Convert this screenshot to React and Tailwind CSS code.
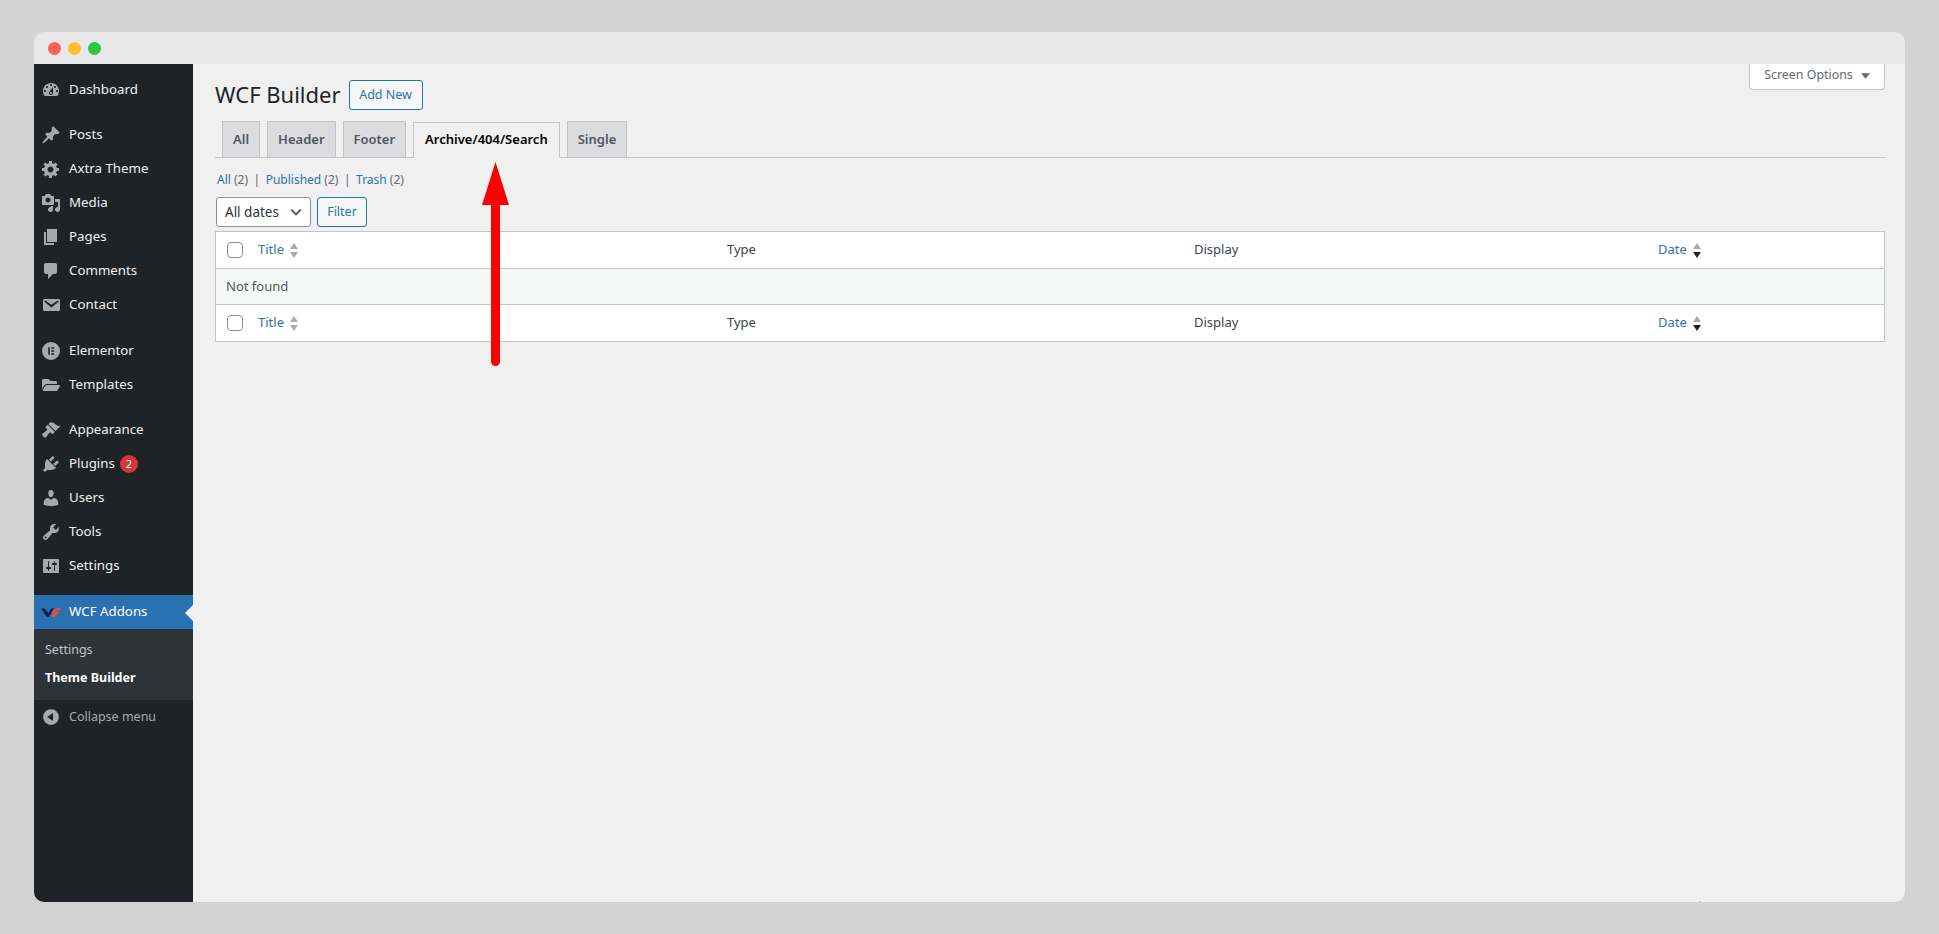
import React from "react";
import { FaFolderOpen } from "react-icons/fa";

const font = "font-['Noto_Sans','Open_Sans',sans-serif]";

const P = {
  dashboard: "M3.76 16h12.48c1.1-1.37 1.76-3.11 1.76-5 0-4.42-3.58-8-8-8s-8 3.58-8 8c0 1.89.66 3.63 1.76 5zM10 4c.55 0 1 .45 1 1s-.45 1-1 1-1-.45-1-1 .45-1 1-1zM6 6c.55 0 1 .45 1 1s-.45 1-1 1-1-.45-1-1 .45-1 1-1zm8 0c.55 0 1 .45 1 1s-.45 1-1 1-1-.45-1-1 .45-1 1-1zm-5.37 5.55L12 7v6c0 1.1-.9 2-2 2s-2-.9-2-2c0-.57.24-1.08.63-1.45zM4 10c.55 0 1 .45 1 1s-.45 1-1 1-1-.45-1-1 .45-1 1-1zm12 0c.55 0 1 .45 1 1s-.45 1-1 1-1-.45-1-1 .45-1 1-1zm-5 3c0-.55-.45-1-1-1s-1 .45-1 1 .45 1 1 1 1-.45 1-1z",
  post: "M10.44 3.02l1.82-1.82 6.36 6.35-1.83 1.82c-1.05-.68-2.48-.57-3.41.36l-.75.75c-.92.93-1.04 2.35-.35 3.41l-1.83 1.82-2.41-2.41-2.8 2.79c-.42.42-3.38 2.71-3.8 2.29s1.86-3.39 2.28-3.81l2.79-2.79L4.1 9.36l1.83-1.82c1.05.69 2.48.57 3.4-.36l.75-.75c.93-.92 1.05-2.35.36-3.41z",
  gear: "M18 12h-2.18c-.17.7-.44 1.35-.81 1.93l1.54 1.54-2.1 2.1-1.54-1.54c-.58.36-1.23.63-1.91.79V19H8v-2.18c-.68-.16-1.33-.43-1.91-.79l-1.54 1.54-2.12-2.12 1.54-1.54c-.36-.58-.63-1.23-.79-1.91H1V9.03h2.17c.16-.7.44-1.35.8-1.94L2.43 5.55l2.1-2.1 1.54 1.54c.58-.37 1.24-.64 1.93-.81V2h3v2.18c.68.16 1.33.43 1.91.79l1.54-1.54 2.12 2.12-1.54 1.54c.36.59.64 1.24.8 1.94H18V12zm-8.5 1.5c1.66 0 3-1.34 3-3s-1.34-3-3-3-3 1.34-3 3 1.34 3 3 3z",
  media: "M13 11V4c0-.55-.45-1-1-1h-1.67L9 1H5L3.67 3H2c-.55 0-1 .45-1 1v7c0 .55.45 1 1 1h10c.55 0 1-.45 1-1zM7 4.5c1.38 0 2.5 1.12 2.5 2.5S8.38 9.5 7 9.5 4.5 8.38 4.5 7 5.62 4.5 7 4.5zM14 6h5v10.5c0 1.38-1.12 2.5-2.5 2.5S14 17.88 14 16.5s1.12-2.5 2.5-2.5c.17 0 .34.02.5.05V9h-3V6zm-4 8.05V13h2v3.5c0 1.38-1.12 2.5-2.5 2.5S7 17.88 7 16.5 8.12 14 9.5 14c.17 0 .34.02.5.05z",
  page: "M6 15V2h10v13H6zm-1 1h8v2H3V5h2v11z",
  comment: "M5 2h9c1.1 0 2 .9 2 2v7c0 1.1-.9 2-2 2h-2l-5 5v-5H5c-1.1 0-2-.9-2-2V4c0-1.1.9-2 2-2z",
  email: "M3.87 4h13.25C18.37 4 19 4.59 19 5.79v8.42c0 1.19-.63 1.79-1.88 1.79H3.87c-1.25 0-1.88-.6-1.88-1.79V5.79c0-1.2.63-1.79 1.88-1.79zm6.62 8.6l6.74-5.53c.24-.2.43-.66.13-1.07-.29-.41-.82-.42-1.17-.17l-5.7 3.86L4.8 5.83c-.35-.25-.88-.24-1.17.17-.3.41-.11.87.13 1.07z",
  elementor: "M10 1a9 9 0 1 0 0 18 9 9 0 0 0 0-18zM7.2 6.2h1.6v7.6H7.2zM10.2 6.2h3v1.5h-3zM10.2 9.2h3v1.5h-3zM10.2 12.3h3v1.5h-3z",
  brush: "M14.48 11.06L7.41 3.99l1.5-1.5c.5-.56 2.3-.47 3.51.32 1.21.8 1.43 1.28 2.91 2.1 1.18.64 2.45 1.26 4.45.85zm-.71.71L6.7 4.7 4.93 6.47c-.39.39-.39 1.02 0 1.41l1.06 1.06c.39.39.39 1.03 0 1.42-.6.6-1.43 1.11-2.21 1.69-.35.26-.7.53-1.01.84C1.43 13.26 1 14.09 1.25 15c.25.91 1.6 2.2 2.5 2.5.9.3 1.73-.19 2.12-1.59.31-.31.58-.66.84-1.01.58-.78 1.09-1.61 1.69-2.21.39-.39 1.03-.39 1.42 0l1.06 1.06c.39.39 1.02.39 1.41 0z",
  plugin: "M13.11 4.36L9.87 7.6 8 5.73l3.24-3.24c.35-.34 1.05-.2 1.56.32.52.51.66 1.21.31 1.55zm-8 1.77l.91-1.12 9.01 9.01-1.19.84c-.71.71-2.63 1.16-3.82 1.16H6.14L4.9 17.26c-.59.59-1.54.59-2.12 0-.59-.58-.59-1.53 0-2.12l1.24-1.24v-3.88c0-1.13.4-3.19 1.09-3.89zm7.26 3.97l3.24-3.24c.34-.35 1.04-.21 1.55.31.52.51.66 1.21.31 1.55l-3.24 3.25z",
  users: "M10 9.25c-2.27 0-2.73-3.44-2.73-3.44C7 4.02 7.82 2 9.97 2c2.16 0 2.98 2.02 2.71 3.81 0 0-.41 3.44-2.68 3.44zm0 2.57L12.72 10c2.39 0 4.52 2.33 4.52 4.53v2.49s-3.65 1.13-7.24 1.13c-3.65 0-7.24-1.13-7.24-1.13v-2.49c0-2.25 1.94-4.48 4.47-4.48z",
  tools: "M16.68 9.77c-1.34 1.34-3.3 1.67-4.95.99l-5.41 6.52c-.99.99-2.59.99-3.58 0s-.99-2.59 0-3.57l6.52-5.42c-.68-1.65-.35-3.61.99-4.95 1.28-1.28 3.12-1.62 4.72-1.06l-2.89 2.89 2.82 2.82 2.86-2.87c.53 1.58.18 3.39-1.08 4.65zM3.81 16.21c.4.39 1.04.39 1.43 0 .4-.4.4-1.04 0-1.43-.39-.4-1.03-.4-1.43 0-.39.39-.39 1.03 0 1.43z",
  settings: "M18 16V4c0-.55-.45-1-1-1H3c-.55 0-1 .45-1 1v12c0 .55.45 1 1 1h14c.55 0 1-.45 1-1zM8 11h1c.55 0 1 .45 1 1s-.45 1-1 1H8v1.5c0 .28-.22.5-.5.5s-.5-.22-.5-.5V13H6c-.55 0-1-.45-1-1s.45-1 1-1h1V5.5c0-.28.22-.5.5-.5s.5.22.5.5V11zm5-2h-1c-.55 0-1-.45-1-1s.45-1 1-1h1V5.5c0-.28.22-.5.5-.5s.5.22.5.5V7h1c.55 0 1 .45 1 1s-.45 1-1 1h-1v5.5c0 .28-.22.5-.5.5s-.5-.22-.5-.5V9z",
  collapse: "M10 2.16c4.33 0 7.84 3.51 7.84 7.84s-3.51 7.84-7.84 7.84S2.16 14.33 2.16 10 5.71 2.16 10 2.16zm2 11.72V6.12L6.18 9.97z",
};

function Dashicon({ d }) {
  return (
    <svg viewBox="0 0 20 20" className="w-5 h-5 fill-[#a7aaad]">
      <path fillRule="evenodd" d={d} />
    </svg>
  );
}

const groups = [
  [{ label: "Dashboard", icon: P.dashboard }],
  [
    { label: "Posts", icon: P.post },
    { label: "Axtra Theme", icon: P.gear },
    { label: "Media", icon: P.media },
    { label: "Pages", icon: P.page },
    { label: "Comments", icon: P.comment },
    { label: "Contact", icon: P.email },
  ],
  [
    { label: "Elementor", icon: P.elementor },
    { label: "Templates", folder: true },
  ],
  [
    { label: "Appearance", icon: P.brush },
    { label: "Plugins", icon: P.plugin, badge: "2" },
    { label: "Users", icon: P.users },
    { label: "Tools", icon: P.tools },
    { label: "Settings", icon: P.settings },
  ],
];

function MenuRow({ item }) {
  return (
    <div className="h-[34px] flex items-center text-[13.3px] text-[#f0f0f1]">
      <span className="w-[35px] pl-[7px] flex items-center">
        {item.folder ? <FaFolderOpen className="w-[18px] h-[18px] ml-[1px] text-[#a7aaad]" /> : <Dashicon d={item.icon} />}
      </span>
      <span>{item.label}</span>
      {item.badge && (
        <span className="ml-[5px] w-[18px] h-[18px] rounded-full bg-[#d63638] text-white text-[11px] flex items-center justify-center">
          {item.badge}
        </span>
      )}
    </div>
  );
}

function Sidebar() {
  return (
    <aside className="w-[159px] shrink-0 bg-[#1f2328] flex flex-col pt-[9px]">
      {groups.map((g, i) => (
        <div key={g[0].label} className={i === 1 ? "mb-[12px]" : i === 3 ? "mb-[12px]" : "mb-[11px]"}>
          {g.map((item) => (
            <MenuRow key={item.label} item={item} />
          ))}
        </div>
      ))}
      <div className="relative h-[34px] bg-[#2a71b2] flex items-center text-[13.3px] text-white">
        <span className="w-[35px] pl-[7px] flex items-center">
          {/* addon logo: dark check stroke with a red mark on its right arm */}
          <svg viewBox="0 0 20 10" className="w-[20px] h-[10px]">
            <path d="M0 1.500h3.500L7.500 6l3-4.500h2.500L7.800 10H6z" fill="#0f2140" />
            <path d="M10.500 5.500C12 2.500 15 .5 20 1l-1 2.500h-3.500L14 6l2.500-1.500H19l-5 5.500h-3.500l1.500-3.500z" fill="#e8503f" />
          </svg>
        </span>
        <span>WCF Addons</span>
        <span className="absolute right-0 top-[10px] w-0 h-0 border-y-[8px] border-y-transparent border-r-[8px] border-r-[#f0f0f1]" />
      </div>
      <div className="bg-[#2e3338] h-[71px] pt-[7px] pl-[11px] text-[12.5px]">
        <div className="h-[28px] flex items-center text-[#c3c4c7]">Settings</div>
        <div className="h-[28px] flex items-center text-white font-bold">Theme Builder</div>
      </div>
      <div className="h-[34px] flex items-center text-[12.5px] text-[#a7aaad]">
        <span className="w-[35px] pl-[7px] flex items-center"><Dashicon d={P.collapse} /></span>
        <span>Collapse menu</span>
      </div>
    </aside>
  );
}

const tabs = ["All", "Header", "Footer", "Archive/404/Search", "Single"];

function Tabs() {
  return (
    <div className="mt-[12px] h-[36px] border-b border-[#c3c4c7] flex items-end gap-[7px] pl-[7px]">
      {tabs.map((t) => {
        const on = t === "Archive/404/Search";
        return (
          <div
            key={t}
            className={
              "h-[36px] border border-[#c3c4c7] flex items-center text-[13px] font-semibold " +
              (on ? "px-[11px] bg-[#f0f0f1] border-b-[#f0f0f1] text-black -mb-[1px]" : "px-[10px] bg-[#dcdcde] text-[#50575e] border-b-0 mb-0")
            }
          >
            {t}
          </div>
        );
      })}
    </div>
  );
}

function SortArrows({ active }) {
  return (
    <svg viewBox="0 0 10 15" className="w-[10px] h-[15px] ml-[5px]">
      <path d="M5 0l4 6H1z" fill="#a7aaad" />
      <path d="M5 15l-4-6h8z" fill={active ? "#1d2327" : "#a7aaad"} />
    </svg>
  );
}

function HeadRow({ top }) {
  return (
    <div className={"h-[37px] bg-white grid grid-cols-[511px_467px_464px_1fr] items-center text-[13px] " + (top ? "border-b" : "border-t") + " border-[#c3c4c7]"}>
      <div className="flex items-center pl-[11px]">
        <span className="w-4 h-4 border border-[#8c8f94] rounded-[4px] bg-white mr-[15px]" />
        <span className="text-[#2f72a8]">Title</span>
        <SortArrows />
      </div>
      <div className="text-[#3c434a]">Type</div>
      <div className="text-[#3c434a]">Display</div>
      <div className="flex items-center">
        <span className="text-[#2f72a8]">Date</span>
        <SortArrows active />
      </div>
    </div>
  );
}

export default function App() {
  return (
    <div className={"h-[934px] bg-[#d3d3d3] pt-[32px] px-[34px] relative overflow-hidden " + font}>
      <div className="h-[870px] rounded-[10px] overflow-hidden flex flex-col">
        <div className="h-[32px] shrink-0 bg-[#e8e8e8] flex items-center gap-[7px] pl-[14px]">
          <span className="w-[13px] h-[13px] rounded-full bg-[#ff5f57]" />
          <span className="w-[13px] h-[13px] rounded-full bg-[#febc2e]" />
          <span className="w-[13px] h-[13px] rounded-full bg-[#28c840]" />
        </div>
        <div className="flex-1 flex min-h-0">
          <Sidebar />
          <main className="flex-1 bg-[#f0f0f1] pl-[22px] pr-[20px] flex flex-col text-[#2c3338]">
            <div className="flex justify-end">
              <div className="h-[26px] w-[136px] pb-[2px] bg-white border border-t-0 border-[#c3c4c7] rounded-b-[4px] flex items-center justify-center gap-[8px] text-[12.4px] text-[#646970]">
                Screen Options
                <svg viewBox="0 0 10 6" className="w-[9px] h-[6px] fill-[#646970]"><path d="M0 0h10L5 6z" /></svg>
              </div>
            </div>
            <div className="flex items-center -mt-[10px] h-[30px]">
              <h1 className="text-[22px] text-[#1d2327] leading-[30px] font-normal pb-[2px]">WCF Builder</h1>
              <span className="ml-[8px] h-[30px] w-[74px] border border-[#2271b1] rounded-[3px] bg-[#f6f7f7] text-[#2f72a8] text-[12.5px] flex items-center justify-center">Add New</span>
            </div>
            <Tabs />
            <div className="mt-[12px] h-[20px] pl-[2px] flex items-center text-[12px] text-[#646970] gap-[4px]">
              <span><span className="text-[#2f72a8]">All</span> (2)</span>
              <span className="text-[#646970] mx-[1.5px]">|</span>
              <span><span className="text-[#2f72a8]">Published</span> (2)</span>
              <span className="text-[#646970] mx-[1.5px]">|</span>
              <span><span className="text-[#2f72a8]">Trash</span> (2)</span>
            </div>
            <div className="mt-[7px] flex items-center gap-[6px] pl-[1px]">
              <div className="w-[95px] h-[30px] bg-white border border-[#8c8f94] rounded-[3px] flex items-center justify-between pl-[8px] pr-[6px] text-[13.5px] text-[#2c3338]">
                All dates
                <svg viewBox="0 0 20 20" className="w-4 h-4 fill-none stroke-[#50575e] stroke-[2.4px]"><path d="M4 7l6 6 6-6" /></svg>
              </div>
              <span className="h-[30px] w-[50px] border border-[#2271b1] rounded-[3px] bg-[#f6f7f7] text-[#2f72a8] text-[12.5px] flex items-center justify-center">Filter</span>
            </div>
            <div className="mt-[4px] border border-[#c3c4c7]">
              <HeadRow top />
              <div className="h-[35px] bg-[#f6f7f7] flex items-center pl-[10px] text-[13px] text-[#50575e]">Not found</div>
              <HeadRow />
            </div>
            <div className="flex-1" />
            <div className="h-[5px] flex justify-end pr-[135px] text-[13px] text-[#8c8f94] whitespace-nowrap">Get Version 6.7.1</div>
          </main>
        </div>
      </div>
      {/* red pointer over the active tab */}
      <svg className="absolute left-[480px] top-[160px] w-[32px] h-[210px]" viewBox="0 0 32 210">
        <path d="M15.500 2L29 45H20V201.500a4.500 4.500 0 0 1-9 0V45H2z" fill="#ff0000" />
      </svg>
    </div>
  );
}
